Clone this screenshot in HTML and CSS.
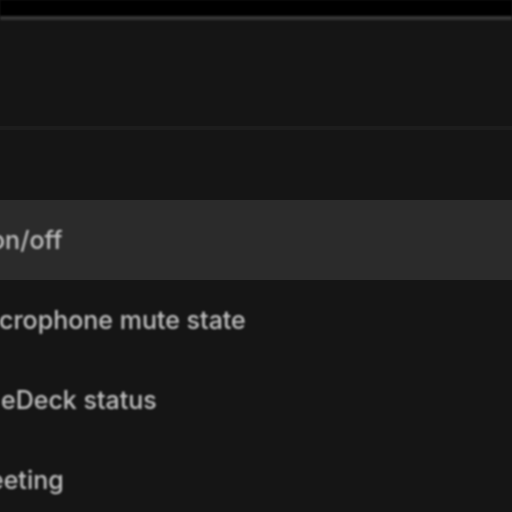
FILE: index.html
```html
<!DOCTYPE html>
<html>
<head>
<meta charset="utf-8">
<link rel="stylesheet" href="styles.css">
</head>
<body>
<div class="topbar"></div>
<div class="panel">
  <div class="header"></div>
  <div class="subheader"></div>
  <ul class="list">
    <li class="row active"><span class="label cut-more">on/off</span></li>
    <li class="row"><span class="label cut-less">crophone mute state</span></li>
    <li class="row"><span class="label cut-none">eDeck status</span></li>
    <li class="row"><span class="label cut-most">eeting</span></li>
  </ul>
</div>
</body>
</html>
```
FILE: styles.css
```css
html, body {
  margin: 0;
  padding: 0;
  background: #151515;
  overflow: hidden;
  font-family: Inter, "Noto Sans", sans-serif;
}
.topbar {
  height: 16px;
  background: #000;
  border-bottom: 4px solid #353535;
  filter: blur(0.8px);
}
.panel {
  background: #151515;
}
.header {
  height: 106px;
  border-bottom: 4px solid #1d1d1d;
}
.subheader {
  height: 70px;
}
.list {
  list-style: none;
  margin: 0;
  padding: 0;
}
.row {
  height: 80px;
  display: flex;
  align-items: center;
  overflow: hidden;
}
.row.active {
  background: #2b2b2b;
}
.label {
  font-size: 25px;
  font-weight: 500;
  color: #c0c0c0;
  white-space: nowrap;
  filter: blur(0.9px);
}
.cut-most {
  margin-left: -11px;
}
.cut-more {
  margin-left: -10px;
}
.cut-less {
  margin-left: -1px;
}
.cut-none {
  margin-left: 1px;
}
```
